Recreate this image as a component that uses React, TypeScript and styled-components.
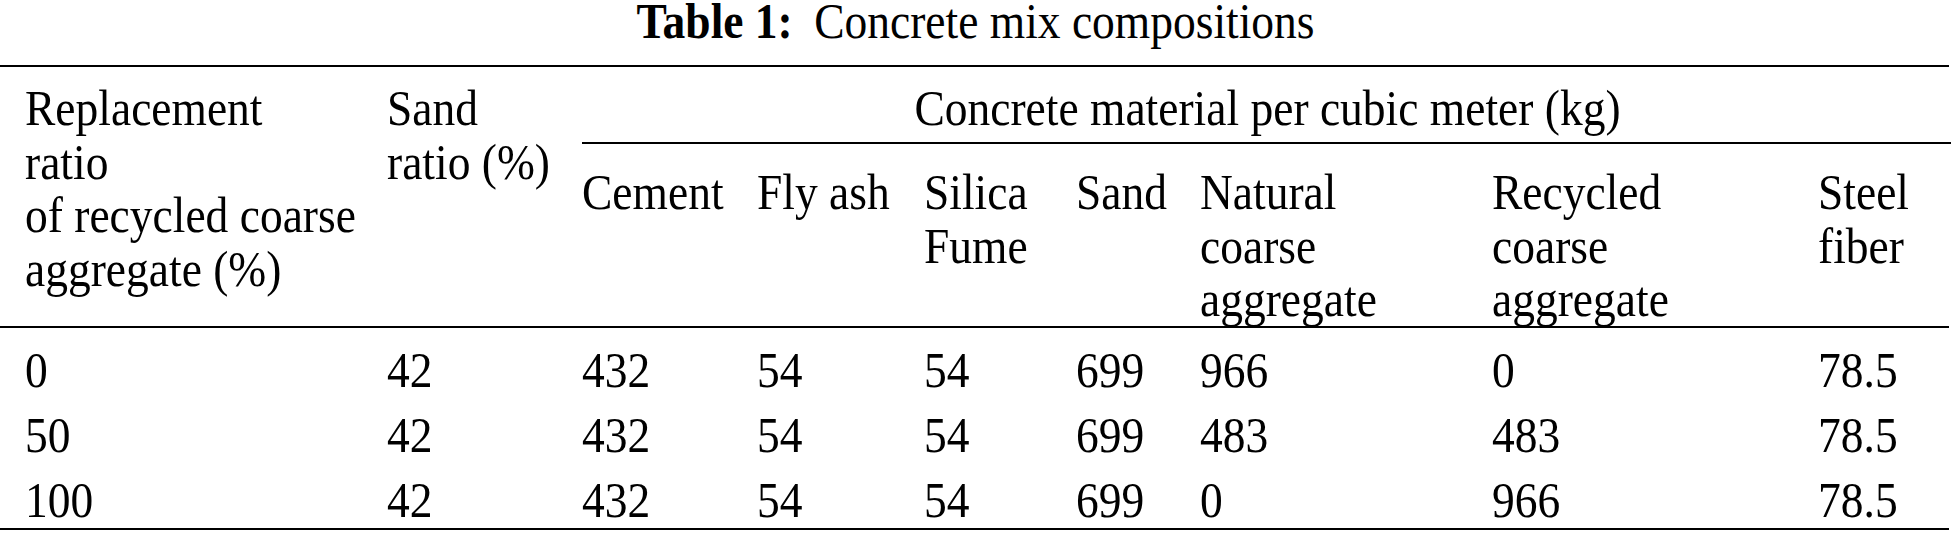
import React from "react";
import styled, { createGlobalStyle, css } from "styled-components";

const GlobalStyle = createGlobalStyle`
  html, body {
    margin: 0;
    padding: 0;
    background: #ffffff;
  }
  body {
    font-family: "Liberation Serif", "Times New Roman", serif;
    color: #000000;
  }
`;

const headerCols = [
  ["Cement"],
  ["Fly ash"],
  ["Silica", "Fume"],
  ["Sand"],
  ["Natural", "coarse", "aggregate"],
  ["Recycled", "coarse", "aggregate"],
  ["Steel", "fiber"],
];

const rows = [
  ["0", "42", "432", "54", "54", "699", "966", "0", "78.5"],
  ["50", "42", "432", "54", "54", "699", "483", "483", "78.5"],
  ["100", "42", "432", "54", "54", "699", "0", "966", "78.5"],
];

const Lines = ({ lines }: { lines: string[] }) => (
  <>
    {lines.map((l, i) => (
      <Line key={i}>{l}</Line>
    ))}
  </>
);

const App = () => {
  return (
    <>
      <GlobalStyle />
      <Page>
        <Caption>
          <CaptionText>
            <CaptionLabel>Table 1:</CaptionLabel> Concrete mix compositions
          </CaptionText>
        </Caption>
        <Table>
          <Head>
            <HeadCell span={2}>
              <Lines lines={["Replacement", "ratio", "of recycled coarse", "aggregate (%)"]} />
            </HeadCell>
            <HeadCell span={2}>
              <Lines lines={["Sand", "ratio (%)"]} />
            </HeadCell>
            <GroupCell>
              <Line>Concrete material per cubic meter (kg)</Line>
            </GroupCell>
            {headerCols.map((lines, i) => (
              <SubCell key={i}>
                <Lines lines={lines} />
              </SubCell>
            ))}
          </Head>
          <Body>
            {rows.map((r, i) => (
              <Row key={i}>
                {r.map((v, j) => (
                  <Cell key={j}>
                    <Line>{v}</Line>
                  </Cell>
                ))}
              </Row>
            ))}
          </Body>
        </Table>
      </Page>
    </>
  );
};

export default App;

const columns = css`
  display: grid;
  grid-template-columns: 362px 195px 175px 167px 152px 124px 292px 326px 133px;
  padding-left: 25px;
`;

const Page = styled.div`
  width: 1951px;
  font-size: 45.5px;
`;

const Caption = styled.div`
  text-align: center;
  line-height: 42px;
  height: 42px;
  margin-bottom: 23px;
  white-space: nowrap;
`;

const CaptionText = styled.span`
  display: inline-block;
  transform: scaleY(1.1);
`;

const CaptionLabel = styled.span`
  font-weight: 700;
  margin-right: 10px;
`;

const Line = styled.span`
  display: block;
  transform: scaleY(1.12);
`;

const Table = styled.div`
  border-top: 2px solid #000;
  border-bottom: 2px solid #000;
  width: 1949px;
`;

const Head = styled.div`
  ${columns};
  grid-template-rows: auto auto;
  border-bottom: 2px solid #000;
  line-height: 53.5px;
  white-space: nowrap;
`;

const HeadCell = styled.div<{ span: number }>`
  grid-row: 1 / span ${(p) => p.span};
  padding-top: 14px;
`;

const GroupCell = styled.div`
  grid-column: 3 / 10;
  grid-row: 1;
  text-align: center;
  padding: 14px 0 7.5px;
  border-bottom: 2px solid #000;
  margin-right: -2px;
`;

const SubCell = styled.div`
  grid-row: 2;
  padding: 21px 0 0.5px;
`;

const Body = styled.div`
  display: flex;
  flex-direction: column;
  gap: 11.5px;
  padding: 15px 0 1.5px;
`;

const Row = styled.div`
  ${columns};
  line-height: 53.5px;
`;

const Cell = styled.div`
  white-space: nowrap;
`;
